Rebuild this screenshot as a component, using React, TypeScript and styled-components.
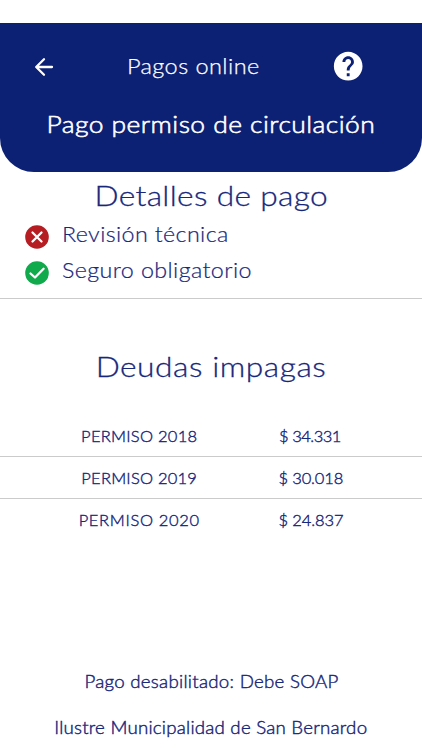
import React from 'react';
import styled, { createGlobalStyle } from 'styled-components';

const BLUE = '#0c2074';
const INK = '#17277a';
const RULE = '#cbcbcb';

const GlobalStyle = createGlobalStyle`
  *, *::before, *::after { box-sizing: border-box; }
  body {
    margin: 0;
    background: #fff;
    color: ${INK};
    font-family: Lato, 'Open Sans', sans-serif;
    font-weight: 300;
  }
`;

const Screen = styled.main`
  display: flex;
  flex-direction: column;
  width: 422px;
  height: 750px;
  padding-top: 22.7px;
  overflow: hidden;
`;

const Wide = styled.span<{ $track: number }>`
  display: inline-block;
  white-space: nowrap;
  letter-spacing: ${(p) => p.$track}px;
  margin-right: ${(p) => -p.$track}px;
  transform: scaleX(1.12);
`;

const Header = styled.header`
  flex: none;
  height: 149.8px;
  padding-top: 24px;
  color: #fff;
  background: ${BLUE};
  border-radius: 0 0 34px 34px;
`;

const TopBar = styled.div`
  display: grid;
  grid-template-columns: 88px 1fr 126px;
  align-items: center;
  height: 40px;
`;

const IconButton = styled.button<{ $inset: number }>`
  display: flex;
  padding: 0;
  margin-left: ${(p) => p.$inset}px;
  border: 0;
  color: inherit;
  background: none;
`;

const BarTitle = styled.div`
  padding: 0 0 1px 3px;
  text-align: center;
  font-size: 21px;
  line-height: 38px;
  -webkit-text-stroke: 0.25px;
`;

const PageTitle = styled.h1`
  margin: 17px 0 0;
  text-align: center;
  font-size: 23.6px;
  font-weight: 300;
  line-height: 40px;
  -webkit-text-stroke: 0.6px;
`;

const Heading = styled.h2`
  margin: 0;
  text-align: center;
  font-size: 28.3px;
  font-weight: 300;
  line-height: 38px;
  -webkit-text-stroke: 0.3px;
`;

const Details = styled.section`
  flex: none;
  height: 126.5px;
  padding-top: 3.5px;
  border-bottom: 1px solid ${RULE};
`;

const StatusList = styled.ul`
  margin: 0;
  padding: 2px 0 0 25px;
  list-style: none;
`;

const Status = styled.li`
  display: flex;
  align-items: flex-start;
  gap: 13.3px;
  height: 36px;
  font-size: 20.8px;
  line-height: 36px;
  -webkit-text-stroke: 0.2px;

  svg { flex: none; margin-top: 8.9px; }
  ${Wide} { transform-origin: left; }
`;

const Debts = styled.section`
  flex: none;
  padding-top: 48px;
`;

const DebtTable = styled.div`
  margin-top: 30px;
`;

const DebtRow = styled.div`
  display: grid;
  grid-template-columns: 278.5px 63px;
  height: 41.5px;
  font-size: 16.5px;
  line-height: 43px;
  -webkit-text-stroke: 0.4px;
  & + & { border-top: 1px solid ${RULE}; }
  &:first-child { line-height: 43.5px; }
`;

const Cell = styled.span<{ $track: number }>`
  text-align: center;
  white-space: nowrap;
  letter-spacing: ${(p) => p.$track}px;
`;

const Footer = styled.footer`
  margin-top: auto;
  padding-bottom: 2.5px;
  text-align: center;
  font-size: 16.7px;
  -webkit-text-stroke: 0.4px;
`;

const FooterLine = styled.p`
  margin: 0;
  height: 49px;
  line-height: 46px;
  &:last-child { height: 40px; line-height: 40px; }
`;

const BackIcon = () => (
  <svg width="26" height="26" viewBox="0 0 26 26" fill="none" stroke="currentColor" strokeWidth="2.3" strokeLinecap="round" strokeLinejoin="round">
    <path d="M13 5.3 5.2 13 13 20.7M5.4 13H21" />
  </svg>
);

const HelpIcon = () => (
  <svg width="34.4" height="34.4" viewBox="0 0 24 24" fill="currentColor">
    <path d="M12 2C6.48 2 2 6.48 2 12s4.48 10 10 10 10-4.48 10-10S17.52 2 12 2zm1 17h-2v-2h2v2zm2.07-7.75-.9.92C13.45 12.9 13 13.5 13 15h-2v-.5c0-1.1.45-2.1 1.17-2.83l1.24-1.26c.37-.36.59-.86.59-1.41 0-1.1-.9-2-2-2s-2 .9-2 2H8c0-2.21 1.79-4 4-4s4 1.79 4 4c0 .88-.36 1.68-.93 2.25z" />
  </svg>
);

const StatusIcon = ({ ok }: { ok: boolean }) => (
  <svg width="24" height="24" viewBox="0 0 24 24" fill="none" stroke="#fff" strokeWidth="2.3" strokeLinecap="round" strokeLinejoin="round">
    <circle cx="12" cy="12" r="11.8" fill={ok ? '#10a94c' : '#b51d22'} stroke="none" />
    <path d={ok ? 'M5.5 12.5 10 16.5 18.6 7.7' : 'M7.5 7.5l9 9M16.5 7.5l-9 9'} />
  </svg>
);

const checks = [
  { label: 'Revisión técnica', ok: false, track: 0.33 },
  { label: 'Seguro obligatorio', ok: true, track: 0.36 },
];

const debts = [
  { name: 'PERMISO 2018', track: 0.27, amount: '$ 34.331', amountTrack: -0.5 },
  { name: 'PERMISO 2019', track: 0.23, amount: '$ 30.018', amountTrack: -0.15 },
  { name: 'PERMISO 2020', track: 0.68, amount: '$ 24.837', amountTrack: -0.1 },
];

export default function App() {
  return (
    <>
      <GlobalStyle />
      <Screen>
        <Header>
          <TopBar>
            <IconButton $inset={31.2} aria-label="Volver"><BackIcon /></IconButton>
            <BarTitle><Wide $track={0.39}>Pagos online</Wide></BarTitle>
            <IconButton $inset={35.4} aria-label="Ayuda"><HelpIcon /></IconButton>
          </TopBar>
          <PageTitle><Wide $track={0.41}>Pago permiso de circulación</Wide></PageTitle>
        </Header>
        <Details>
          <Heading><Wide $track={0.3}>Detalles de pago</Wide></Heading>
          <StatusList>
            {checks.map((c) => (
              <Status key={c.label}>
                <StatusIcon ok={c.ok} />
                <Wide $track={c.track}>{c.label}</Wide>
              </Status>
            ))}
          </StatusList>
        </Details>
        <Debts>
          <Heading><Wide $track={0.49}>Deudas impagas</Wide></Heading>
          <DebtTable>
            {debts.map((d) => (
              <DebtRow key={d.name}>
                <Cell $track={d.track}>{d.name}</Cell>
                <Cell $track={d.amountTrack}>{d.amount}</Cell>
              </DebtRow>
            ))}
          </DebtTable>
        </Debts>
        <Footer>
          <FooterLine><Wide $track={0.25}>Pago desabilitado: Debe SOAP</Wide></FooterLine>
          <FooterLine><Wide $track={0.2}>Ilustre Municipalidad de San Bernardo</Wide></FooterLine>
        </Footer>
      </Screen>
    </>
  );
}
